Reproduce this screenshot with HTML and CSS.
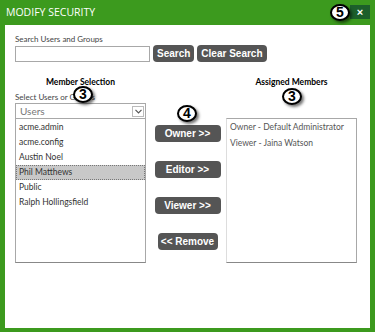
FILE: index.html
```html
<!DOCTYPE html>
<html lang="en">
<head>
    <meta charset="UTF-8">
    <meta name="viewport" content="width=device-width, initial-scale=1.0">
    <title>Modify Security</title>
    <link rel="stylesheet" href="styles.css">
</head>
<body>
    <div class="dialog">
        <div class="titlebar">
            <div class="title">MODIFY SECURITY</div>
            <div class="badge badge_five">5</div>
            <div class="close">&times;</div>
        </div>
        <div class="panel">
            <div class="search_label">Search Users and Groups</div>
            <div class="search_row">
                <input class="search_input" type="text">
                <div class="btn">Search</div>
                <div class="btn">Clear Search</div>
            </div>
            <div class="columns">
                <div class="col">
                    <div class="col_head">Member Selection</div>
                    <div class="badge badge_left">3</div>
                    <div class="sel_label">Select Users or Groups</div>
                    <div class="dropdown">
                        <span>Users</span>
                        <span class="arrow">
                            <svg width="7" height="5" viewBox="0 0 7 5"><path d="M0.5 0.8 L3.5 3.8 L6.5 0.8" fill="none" stroke="#555" stroke-width="1.2"/></svg>
                        </span>
                    </div>
                    <div class="listbox left_list">
                        <div class="item">acme.admin</div>
                        <div class="item">acme.config</div>
                        <div class="item">Austin Noel</div>
                        <div class="item selected">Phil Matthews</div>
                        <div class="item">Public</div>
                        <div class="item">Ralph Hollingsfield</div>
                    </div>
                </div>
                <div class="middle">
                    <div class="badge badge_mid">4</div>
                    <div class="btn move">Owner &gt;&gt;</div>
                    <div class="btn move">Editor &gt;&gt;</div>
                    <div class="btn move">Viewer &gt;&gt;</div>
                    <div class="btn remove">&lt;&lt; Remove</div>
                </div>
                <div class="col">
                    <div class="col_head">Assigned Members</div>
                    <div class="badge badge_right">3</div>
                    <div class="listbox right_list">
                        <div class="item">Owner - Default Administrator</div>
                        <div class="item">Viewer - Jaina Watson</div>
                    </div>
                </div>
            </div>
        </div>
    </div>
</body>
</html>
```

FILE: styles.css
```css
*{
    margin: 0;
    padding: 0;
    box-sizing: border-box;
}
body{
    width: 375px;
    height: 332px;
    background: #3c9a1e;
    font-family: Lato, "Open Sans", sans-serif;
    overflow: hidden;
}
.dialog{
    padding: 0 5px;
}
.titlebar{
    position: relative;
    height: 25px;
    display: flex;
    justify-content: space-between;
    align-items: flex-start;
}
.title{
    color: #fff;
    font-family: "Open Sans", sans-serif;
    font-size: 10.5px;
    line-height: 25px;
    padding-left: 1px;
}
.close{
    margin-top: 5px;
    width: 20px;
    height: 14px;
    background: #1c5f2b;
    color: #fff;
    font-family: "Liberation Sans", sans-serif;
    font-weight: bold;
    font-size: 11px;
    line-height: 14px;
    text-align: center;
}
.badge{
    position: absolute;
    width: 20px;
    height: 17px;
    border: 2px solid #000;
    border-radius: 50%;
    background: #fff;
    color: #000;
    font-family: "Liberation Sans", sans-serif;
    font-weight: bold;
    font-size: 14px;
    line-height: 13px;
    text-align: center;
    box-shadow: 2px 2px 3px rgba(0, 0, 0, 0.55);
    z-index: 2;
}
.badge_five{
    left: 325px;
    top: 4px;
}
.panel{
    height: 303px;
    background: #fff;
    padding: 9px 10px 0;
}
.search_label{
    font-size: 8px;
    line-height: 11px;
    color: #444;
}
.search_row{
    display: flex;
    align-items: center;
    gap: 3px;
}
.search_input{
    width: 135px;
    height: 16px;
    border: 1px solid #a8a8a8;
}
.btn{
    background: #555;
    color: #fff;
    font-family: "Liberation Sans", sans-serif;
    font-weight: bold;
    font-size: 10px;
    height: 17px;
    line-height: 17px;
    padding: 0 4px;
    border-radius: 4px;
    text-align: center;
    white-space: nowrap;
}
.columns{
    margin-top: 14px;
    display: grid;
    grid-template-columns: 131px 80px 131px;
}
.col{
    position: relative;
}
.col_head{
    text-align: center;
    font-size: 8.5px;
    font-weight: bold;
    line-height: 12px;
    color: #000;
}
.badge_left{
    left: 58px;
    top: 10px;
}
.badge_right{
    left: 56px;
    top: 12px;
}
.sel_label{
    margin-top: 3px;
    font-size: 8px;
    line-height: 12px;
    color: #444;
    white-space: nowrap;
}
.dropdown{
    height: 15px;
    border: 1px solid #a8a8a8;
    border-bottom: none;
    display: flex;
    justify-content: space-between;
    align-items: center;
    padding-left: 4px;
    font-size: 10px;
    color: #777;
}
.arrow{
    width: 12px;
    height: 11px;
    margin-right: 1px;
    border: 1px solid #bbb;
    display: flex;
    justify-content: center;
    align-items: center;
}
.listbox{
    height: 145px;
    border: 1px solid #a8a8a8;
    border-bottom-color: #888;
    font-size: 8.5px;
    white-space: nowrap;
}
.left_list{
    padding-top: 1px;
    color: #333;
}
.right_list{
    margin-top: 30px;
    color: #555;
    border-left-color: #ddd;
}
.item{
    line-height: 15px;
    padding-left: 3px;
}
.right_list .item{
    line-height: 16px;
}
.selected{
    background: #c8c8c8;
    outline: 1px dotted #777;
    outline-offset: -1px;
}
.middle{
    position: relative;
    padding-top: 49px;
    padding-left: 3px;
    display: flex;
    flex-direction: column;
    align-items: center;
    gap: 19px;
}
.badge_mid{
    left: 31px;
    top: 29px;
}
.move{
    width: 66px;
}
.remove{
    width: 60px;
    padding: 0;
}
```
